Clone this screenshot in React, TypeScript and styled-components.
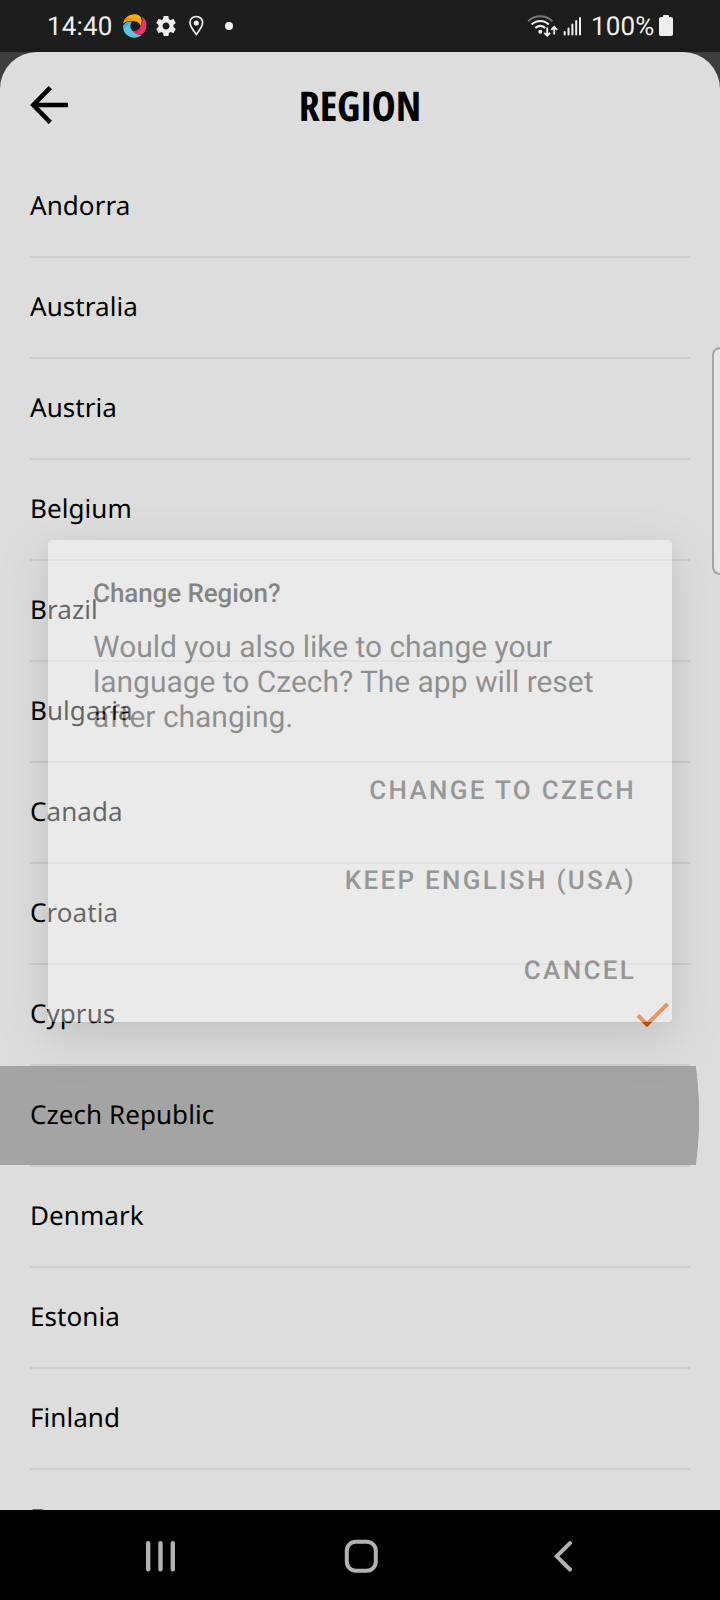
import React from "react";
import styled, { createGlobalStyle } from "styled-components";

const GlobalStyle = createGlobalStyle`
  *, *::before, *::after { box-sizing: border-box; }
  html, body { margin: 0; padding: 0; background: #000; }
  body { text-rendering: geometricPrecision; }
  svg { display: block; flex: none; }
`;

const Screen = styled.div`
  position: relative;
  display: flex;
  flex-direction: column;
  width: 720px;
  height: 1600px;
  overflow: hidden;
  background: #3e3e3e;
  font-family: Roboto, "Liberation Sans", sans-serif;
`;

const StatusBar = styled.header`
  display: flex;
  justify-content: space-between;
  align-items: center;
  flex: none;
  height: 52px;
  padding: 0 47px;
  background: #1d1d1d;
  color: #efefef;
  font-size: 26px;
`;

const StatusGroup = styled.div<{ $gap?: number }>`
  display: flex;
  align-items: center;
  gap: ${(p) => p.$gap ?? 0}px;
`;

const StatusText = styled.span<{ $width: number }>`
  width: ${(p) => p.$width}px;
  padding-top: 2px;
  line-height: 50px;
  letter-spacing: 0.15px;
  white-space: nowrap;
`;

const Notifications = styled.div`
  display: grid;
  grid-template-columns: 31px 34px 37px 8px;
  align-items: center;
`;

const Sheet = styled.main`
  display: flex;
  flex-direction: column;
  flex: 1;
  min-height: 0;
  overflow: hidden;
  background: #ddd;
  border-radius: 37px 37px 0 0;
`;

const TitleBar = styled.div`
  display: grid;
  grid-template-columns: 60px 1fr 60px;
  align-items: center;
  flex: none;
  height: 105px;
  padding: 0 30px;
`;

const BackButton = styled.button`
  display: flex;
  padding: 0;
  border: 0;
  background: none;
  color: #000;
`;

const Title = styled.h1`
  margin: 3px 0 0;
  text-align: center;
  color: #000;
  font-family: "Open Sans", "Noto Sans", sans-serif;
  font-size: 41px;
  font-weight: 700;
  font-stretch: 75%;
  line-height: 56px;
`;

const RegionList = styled.ul`
  flex: 1;
  min-height: 0;
  margin: 0;
  padding: 0;
  overflow: hidden;
  list-style: none;
`;

const RegionRow = styled.li<{ $pressed?: boolean }>`
  padding: 0 30px;
  height: 101px;
  background: ${(p) =>
    p.$pressed
      ? "radial-gradient(circle 370px at 329.5px 49.5px, #a4a4a4 99.8%, transparent 100%) 0 0 / 100% 99px no-repeat"
      : "none"};
`;

const RegionContent = styled.div`
  display: flex;
  align-items: center;
  justify-content: space-between;
  height: 101px;
  padding-right: 21px;
  border-bottom: 2px solid #cdcdcd;
  color: #000;
  font-family: "Noto Sans", "Open Sans", sans-serif;
  font-size: 26px;
  line-height: 36px;
  letter-spacing: 0.06px;
`;

const RegionName = styled.span`
  padding-bottom: 4px;
`;

const EdgeHandle = styled.div`
  position: absolute;
  top: 347px;
  right: -9px;
  width: 17px;
  height: 228px;
  border: 2px solid #a6a6a6;
  border-radius: 8px;
  background: #e6e6e6;
`;

const Dialog = styled.section`
  position: absolute;
  top: 540px;
  left: 48px;
  width: 624px;
  height: 482px;
  padding: 37px 36px 0 45px;
  border-radius: 4px;
  background: #fff;
  box-shadow: 0 16px 46px rgba(0, 0, 0, 0.3), 0 0 12px rgba(0, 0, 0, 0.06);
  opacity: 0.4;
`;

const DialogTitle = styled.h2`
  margin: 0;
  color: #000;
  font-size: 26px;
  font-weight: 500;
  line-height: 34px;
  letter-spacing: -0.08px;
`;

const DialogText = styled.p`
  margin: 19px 0 0;
  color: #1d1d1d;
  font-size: 30px;
  line-height: 35px;
  letter-spacing: -0.03px;
  white-space: pre-line;
`;

const DialogActions = styled.div`
  display: flex;
  flex-direction: column;
  align-items: flex-end;
  margin-top: 11px;
`;

const DialogButton = styled.button`
  height: 90px;
  padding: 0;
  border: 0;
  background: none;
  color: #303030;
  font-family: inherit;
  font-size: 26px;
  font-weight: 500;
  letter-spacing: 2.3px;
  text-transform: uppercase;
  text-rendering: inherit;
`;

const NavBar = styled.nav`
  display: grid;
  grid-template-columns: 199px 209px 20px;
  align-items: center;
  flex: none;
  height: 90px;
  padding: 2px 0 0 145px;
  background: #000;
  color: #b2b2b2;
`;

const regions = [
  "Andorra",
  "Australia",
  "Austria",
  "Belgium",
  "Brazil",
  "Bulgaria",
  "Canada",
  "Croatia",
  "Cyprus",
  "Czech Republic",
  "Denmark",
  "Estonia",
  "Finland",
  "France",
];

const selectedRegion = "Cyprus";
const pressedRegion = "Czech Republic";

const SwirlIcon = () => (
  <svg width="24" height="24" viewBox="0 0 24 24">
    <path d="M0.300 9.200C1 4.500 5.500 .2 11.500 .2c4.300 0 7 2.600 7.200 6 .1 2.300-.3 4.200-1.200 5.600C16.800 9 14.500 7.300 11.500 7.200 7.500 7 3.500 6.800.3 9.200z" fill="#ffab0f" />
    <path d="M0.300 9.200C3.500 5.600 7.500 5.400 12 7.200 9.500 4.800 6 3.600 2.600 4.300z" fill="#f58a0a" />
    <path d="M19.300 2.800C23 5.500 24 9.500 23.300 13c-.8 4.800-4 8-7.300 8-2.600 0-4.600-1.400-6.300-4.200 4.200.8 6.900-1 8-4.600C18.800 9.300 20.300 6 19.300 2.800z" fill="#f5316c" />
    <path d="M9.700 16.800c4.200.8 6.900-1 8-4.600.2 4-1.400 7-4.200 8.200-1.500-.6-2.700-1.700-3.800-3.600z" fill="#e02860" />
    <path d="M0.200 11.500C2 8.500 5 7.200 8.800 7.800 6.500 11 7 14.500 9.500 17c2.300 2.500 5.500 4.300 9 4.300-3 2.500-7.500 3.200-11 1.700C2.500 21-.3 16.500.2 11.500z" fill="#5cc4dc" />
    <path d="M0.200 11.500C2 8.500 5 7.200 8.800 7.800 5.500 9.500 3.500 12.500 1 14.500z" fill="#3fb0c9" />
  </svg>
);

const GearIcon = () => (
  <svg width="24" height="24" viewBox="0 0 24 24" fill="currentColor">
    <path d="M19.430 12.980c.04-.32.07-.64.07-.98s-.03-.66-.07-.98l2.110-1.650c.19-.15.24-.42.12-.64l-2-3.460c-.12-.22-.39-.3-.61-.22l-2.490 1c-.52-.4-1.080-.73-1.690-.98l-.38-2.650C14.460 2.180 14.250 2 14 2h-4c-.25 0-.46.18-.49.42l-.38 2.650c-.61.25-1.170.59-1.690.98l-2.490-1c-.23-.09-.49 0-.61.22l-2 3.460c-.13.22-.07.49.12.64l2.110 1.650c-.04.32-.07.65-.07.98s.03.66.07.98l-2.110 1.650c-.19.15-.24.42-.12.64l2 3.460c.12.22.39.3.61.22l2.490-1c.52.4 1.080.73 1.690.98l.38 2.650c.03.24.24.42.49.42h4c.25 0 .46-.18.49-.42l.38-2.650c.61-.25 1.170-.59 1.690-.98l2.490 1c.23.09.49 0 .61-.22l2-3.460c.12-.22.07-.49-.12-.64l-2.110-1.650zM12 15.500c-1.930 0-3.500-1.570-3.500-3.500s1.570-3.500 3.500-3.500 3.500 1.570 3.500 3.500-1.570 3.500-3.500 3.500z" />
  </svg>
);

const PinIcon = () => (
  <svg width="16" height="22" viewBox="0 0 16 22">
    <path d="M8.300 1.500C4.800 1.500 2 4.100 2 7.600c0 3.900 6.300 12 6.300 12s6.300-8.100 6.300-12c0-3.500-2.800-6.100-6.300-6.100z" fill="none" stroke="currentColor" strokeWidth="1.700" />
    <circle cx="8.300" cy="8" r="2.600" fill="currentColor" />
  </svg>
);

const DotIcon = () => (
  <svg width="8" height="8" viewBox="0 0 8 8">
    <circle cx="4" cy="4" r="4" fill="currentColor" />
  </svg>
);

const WifiIcon = () => (
  <svg width="31" height="24" viewBox="0 0 31 24" fill="none" stroke="currentColor">
    <path d="M1.200 7.200C8 .6 18.500 .6 25.300 7.200" strokeWidth="2" opacity=".42" />
    <path d="M4.700 10.500C9.500 5.800 17 5.800 21.800 10.500" strokeWidth="2.200" />
    <path d="M8.300 14c2.800-2.900 7.100-2.900 9.900 0" strokeWidth="2.200" />
    <circle cx="13.300" cy="17.800" r="2" fill="currentColor" stroke="none" />
    <path d="M20.200 13.500v8M17.300 18.800l2.900 2.900 2.900-2.900M27.200 20.500v-8M24.300 15.800l2.900-2.900 2.900 2.900" strokeWidth="1.900" />
  </svg>
);

const SignalIcon = () => (
  <svg width="19" height="20" viewBox="0 0 19 20" stroke="currentColor" strokeWidth="2" strokeLinecap="round">
    <path d="M1.700 18.500V16M5.500 18.500V12.500M9.400 18.500V8.500M13.200 18.500V5M17 18.500V2" />
  </svg>
);

const BatteryIcon = () => (
  <svg width="14" height="22" viewBox="0 0 14 22" fill="currentColor">
    <path d="M4 2V1Q4 0 5 0h4q1 0 1 1v1h2q2 0 2 2v15q0 2-2 2H2q-2 0-2-2V4q0-2 2-2z" />
  </svg>
);

const ArrowIcon = () => (
  <svg width="38" height="38" viewBox="0 0 38 38" fill="none" stroke="currentColor" strokeWidth="4.600">
    <path d="M20.300 1.700 3.300 19l17 17.300M4 19h34" />
  </svg>
);

const CheckIcon = () => (
  <svg width="33" height="26" viewBox="0 0 33 26">
    <path d="M.5 14.800 3.300 12 11 19.600 30.200.4 33 3.200 11 25.300z" fill="#d35400" />
  </svg>
);

const RecentsIcon = () => (
  <svg width="31" height="32" viewBox="0 0 31 32" stroke="currentColor" strokeWidth="4.400" strokeLinecap="round">
    <path d="M3.200 3.300v26M15.500 3.300v26M27.800 3.300v26" />
  </svg>
);

const HomeIcon = () => (
  <svg width="34" height="34" viewBox="0 0 34 34" fill="none" stroke="currentColor" strokeWidth="4">
    <rect x="2.800" y="2.700" width="29" height="29" rx="9" />
  </svg>
);

const NavBackIcon = () => (
  <svg width="20" height="32" viewBox="0 0 20 32" fill="none" stroke="currentColor" strokeWidth="4" strokeLinecap="round">
    <path d="M17 3.100 3.700 16.300 17 29.500" />
  </svg>
);

export default function App() {
  return (
    <Screen>
      <GlobalStyle />
      <StatusBar>
        <StatusGroup>
          <StatusText $width={76}>14:40</StatusText>
          <Notifications>
            <SwirlIcon />
            <GearIcon />
            <PinIcon />
            <DotIcon />
          </Notifications>
        </StatusGroup>
        <StatusGroup $gap={9}>
          <StatusGroup $gap={5}>
            <WifiIcon />
            <SignalIcon />
          </StatusGroup>
          <StatusGroup>
            <StatusText $width={68}>100%</StatusText>
            <BatteryIcon />
          </StatusGroup>
        </StatusGroup>
      </StatusBar>

      <Sheet>
        <TitleBar>
          <BackButton aria-label="Back">
            <ArrowIcon />
          </BackButton>
          <Title>REGION</Title>
        </TitleBar>
        <RegionList>
          {regions.map((name) => (
            <RegionRow key={name} $pressed={name === pressedRegion}>
              <RegionContent>
                <RegionName>{name}</RegionName>
                {name === selectedRegion && <CheckIcon />}
              </RegionContent>
            </RegionRow>
          ))}
        </RegionList>
      </Sheet>

      <NavBar>
        <RecentsIcon />
        <HomeIcon />
        <NavBackIcon />
      </NavBar>

      <EdgeHandle />

      <Dialog role="dialog">
        <DialogTitle>Change Region?</DialogTitle>
        <DialogText>
          {"Would you also like to change your\nlanguage to Czech? The app will reset\nafter changing."}
        </DialogText>
        <DialogActions>
          <DialogButton>Change to Czech</DialogButton>
          <DialogButton>Keep English (USA)</DialogButton>
          <DialogButton>Cancel</DialogButton>
        </DialogActions>
      </Dialog>
    </Screen>
  );
}
